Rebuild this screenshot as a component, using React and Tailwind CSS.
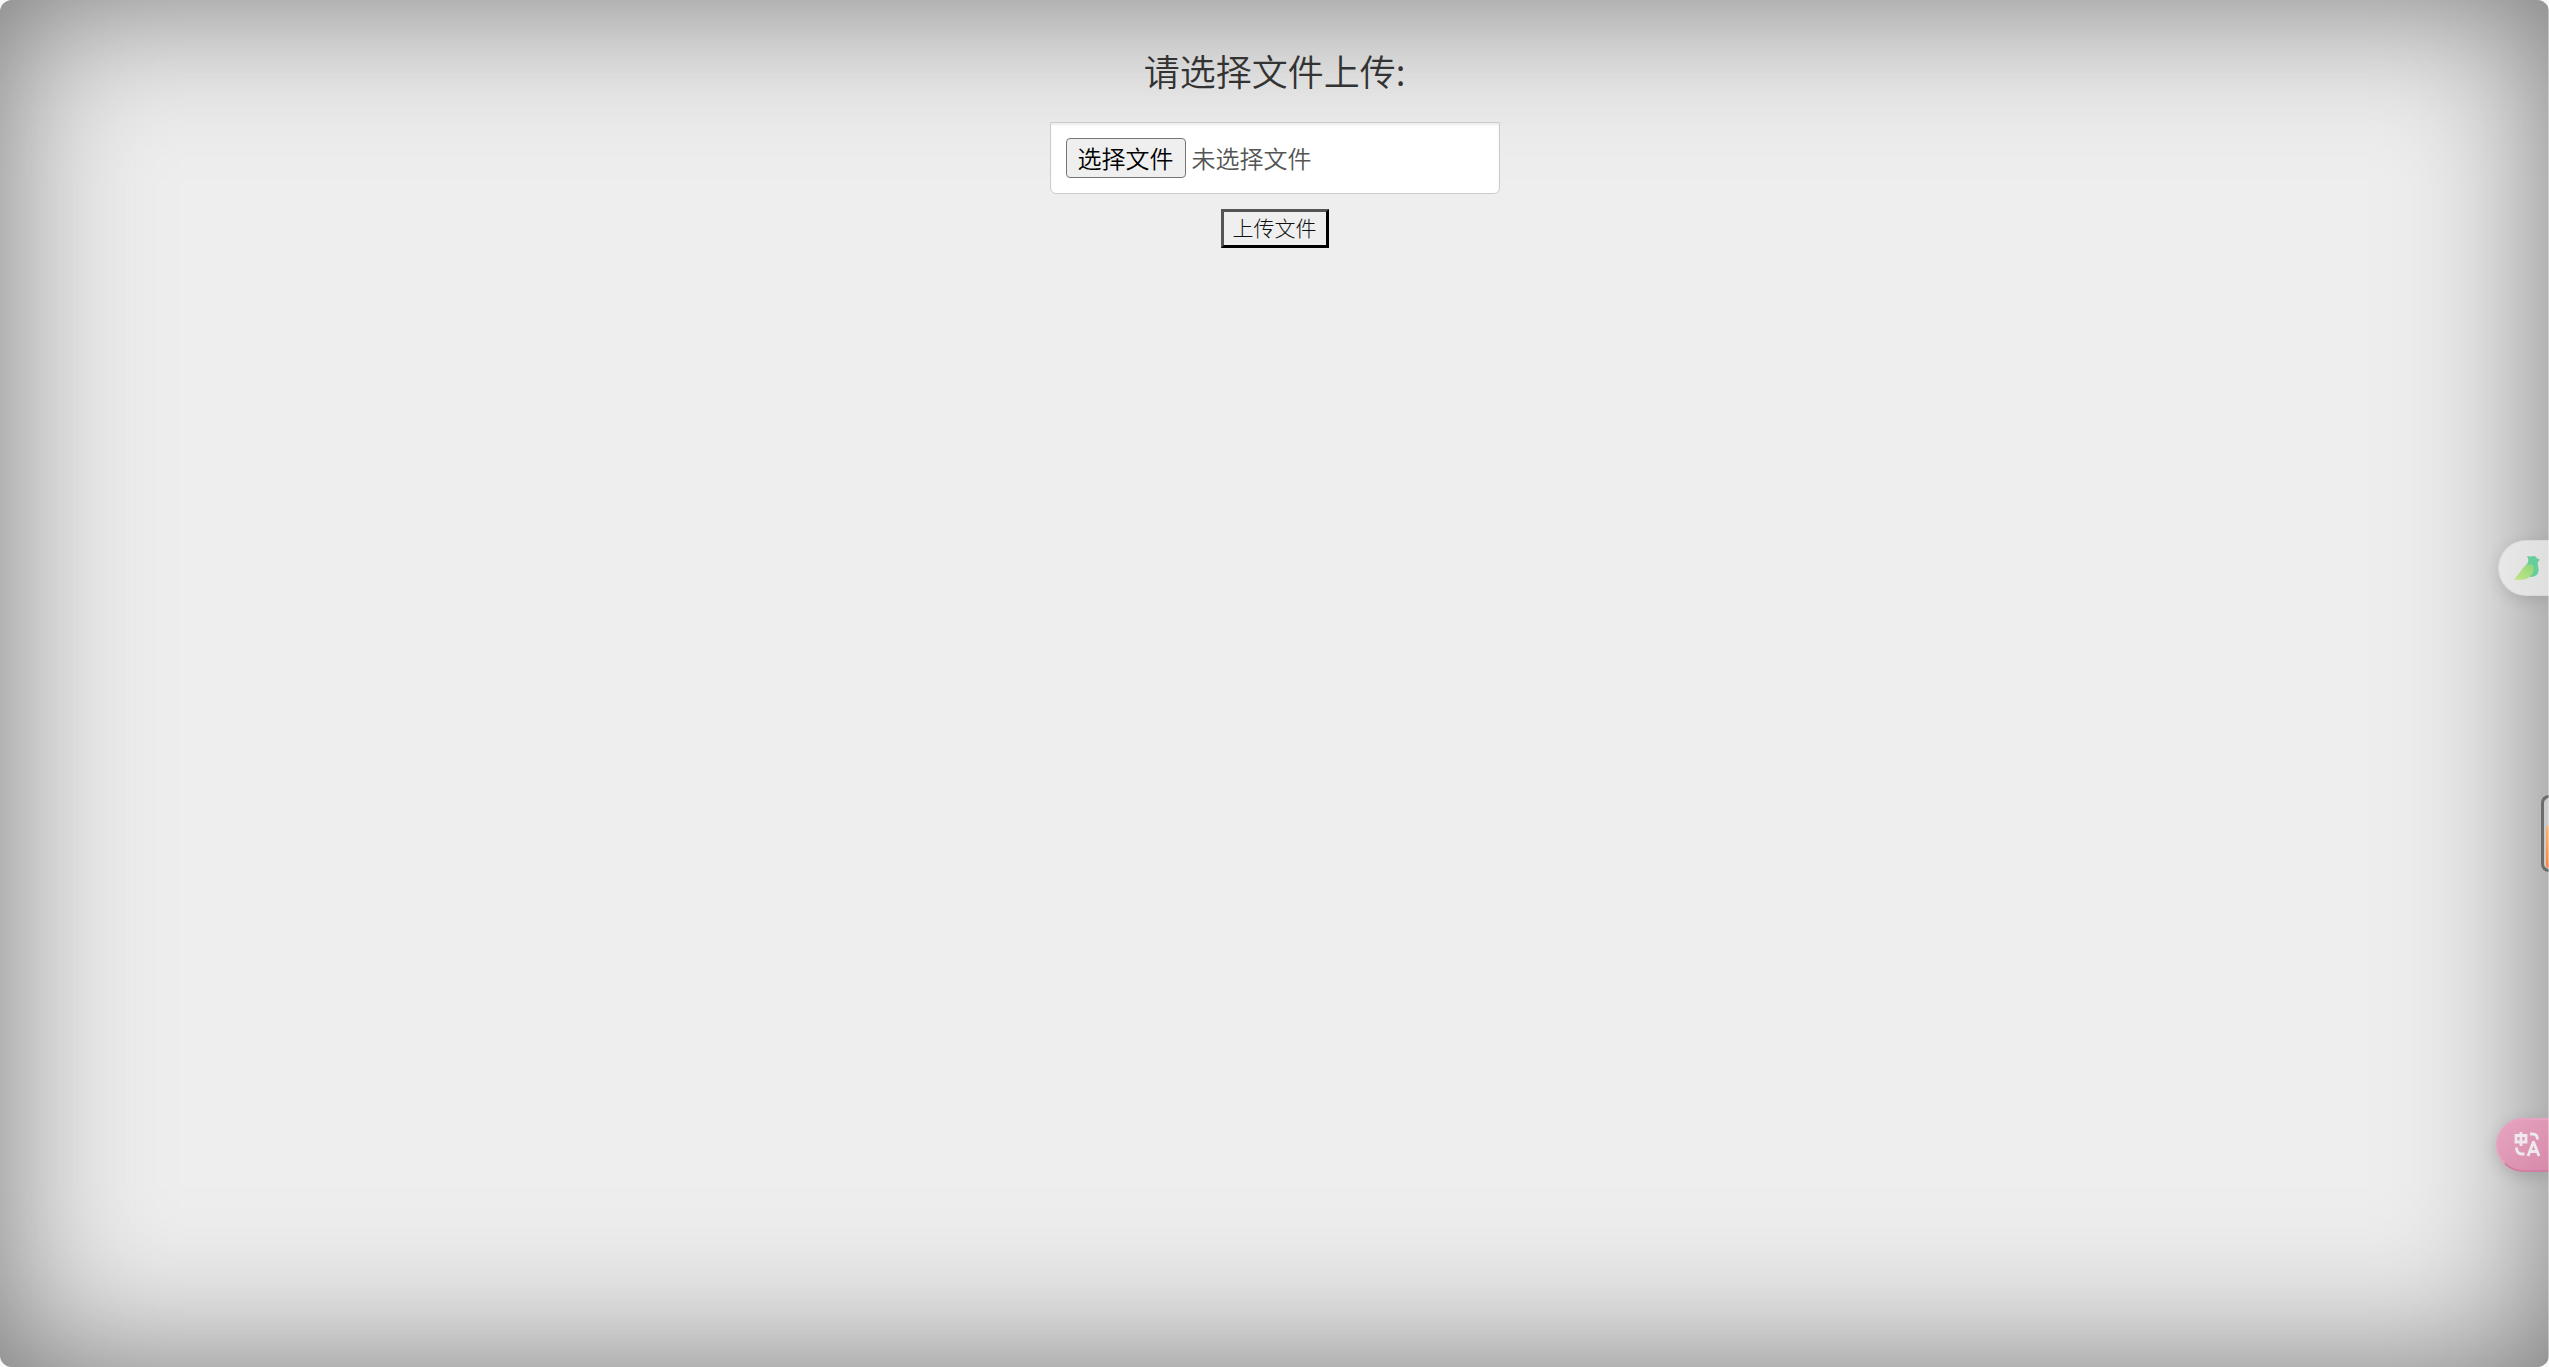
import { useState } from "react";

function UploadForm() {
  const [name, setName] = useState("");
  return (
    <form
      className="flex flex-col items-center"
      onSubmit={(e) => e.preventDefault()}
    >
      <h1 className="text-4xl leading-10 font-[350] text-[#333]">请选择文件上传:</h1>
      <div className="relative mt-8 flex h-18 w-[450px] items-center gap-1.5 rounded-b-md border border-[#ccc] bg-white px-[15px] text-2xl font-[350] text-[#555] shadow-[inset_0_2px_2px_rgba(0,0,0,0.075)]">
        <input
          id="file"
          type="file"
          className="peer sr-only"
          onChange={(e) => setName(e.target.files[0]?.name ?? "")}
        />
        <label
          htmlFor="file"
          className="flex h-10 w-30 shrink-0 items-center justify-center rounded border border-[#767676] bg-[#efefef] text-black peer-focus-visible:outline-2"
        >
          选择文件
        </label>
        <span className="leading-10">{name || "未选择文件"}</span>
      </div>
      <button
        type="submit"
        className="mt-[15px] flex h-[39px] w-[108px] items-center justify-center border-3 border-t-[#555] border-r-black border-b-black border-l-[#555] bg-[#efefef] pb-1 text-[21px] leading-8 font-light text-[#111]"
      >
        上传文件
      </button>
    </form>
  );
}

function BirdIcon() {
  return (
    <svg viewBox="0 0 28 26" className="h-[26px] w-7" aria-hidden="true">
      <defs>
        <linearGradient id="wing" x1="0" y1="1" x2="1" y2="0">
          <stop offset="0" stopColor="#c5e587" />
          <stop offset="1" stopColor="#91d57d" />
        </linearGradient>
      </defs>
      <path
        d="M14 1 C17 2 19 1 22 1 C23 2 24 4 27 4.500 L25 7 C24 10 26 12 25.500 16 C25 20 22 22 16 22 L12 11 C16 8 16 5 14 1Z"
        fill="#67cd9b"
      />
      <path
        d="M1 24.500 L11 12 C14 9 18 9 20 10.500 C22 14 20 20 15 23 C11 25.500 5 25 1 24.500Z"
        fill="url(#wing)"
      />
    </svg>
  );
}

function TranslateIcon() {
  return (
    <svg
      viewBox="0 0 27 26"
      className="h-[26px] w-[27px] shrink-0"
      fill="none"
      stroke="#eee9ec"
      strokeWidth="2.8"
      aria-hidden="true"
    >
      <path d="M2 4.500h10v6.500H2zM7 1v14" />
      <path d="M16 3h2.500c3.500 0 5 2 5 5.500M2.500 16.500c0 4.500 2 6.500 5.500 6.500h2.500" />
      <path d="M14 25 19.250 11.500h.5L25 25M16 20.500h7" />
    </svg>
  );
}

export default function App() {
  return (
    <div className="relative min-h-screen bg-[#f8f8f8] font-['Noto_Sans_CJK_SC',sans-serif]">
      <main className="relative isolate min-h-screen overflow-hidden rounded-xl bg-[#777] pt-[50px]">
        {/* Soft-edged light panel over the dark base makes the vignette */}
        <div className="absolute inset-0 -z-10 bg-[#eee] blur-[76px]" />
        <UploadForm />
      </main>
      <button
        type="button"
        aria-label="鸟"
        className="absolute top-[540px] right-0 flex h-14 w-[51px] items-center rounded-l-full border border-r-0 border-[#d8d8d8] bg-linear-to-r from-[#e8e8e8] to-[#dfdfdf] pl-3.5 shadow-[0_4px_16px_rgba(0,0,0,0.12)]"
      >
        <BirdIcon />
      </button>
      <button
        type="button"
        aria-label="侧栏"
        className="absolute top-[795px] right-0 flex h-[77px] w-2 items-end rounded-l-lg border-3 border-r-0 border-[#6c6c6c] bg-[#cacaca] pb-px pl-0.5"
      >
        <span className="h-[42px] w-full rounded-l-sm bg-linear-to-b from-[#fbb36f] to-[#fa8340]" />
      </button>
      <button
        type="button"
        aria-label="翻译"
        className="absolute top-[1118px] right-0 flex h-[54px] w-[53px] items-center rounded-l-full border-2 border-r-0 border-t-[#e6a2c0] border-b-[#cf7fa2] border-l-[#e6a2c0] bg-linear-to-br from-[#e5a5c0] to-[#d889ab] pb-0.5 pl-4 shadow-[0_4px_16px_rgba(0,0,0,0.15)]"
      >
        <TranslateIcon />
      </button>
      <div className="pointer-events-none absolute inset-y-0 right-0 w-px bg-white/40" />
    </div>
  );
}
